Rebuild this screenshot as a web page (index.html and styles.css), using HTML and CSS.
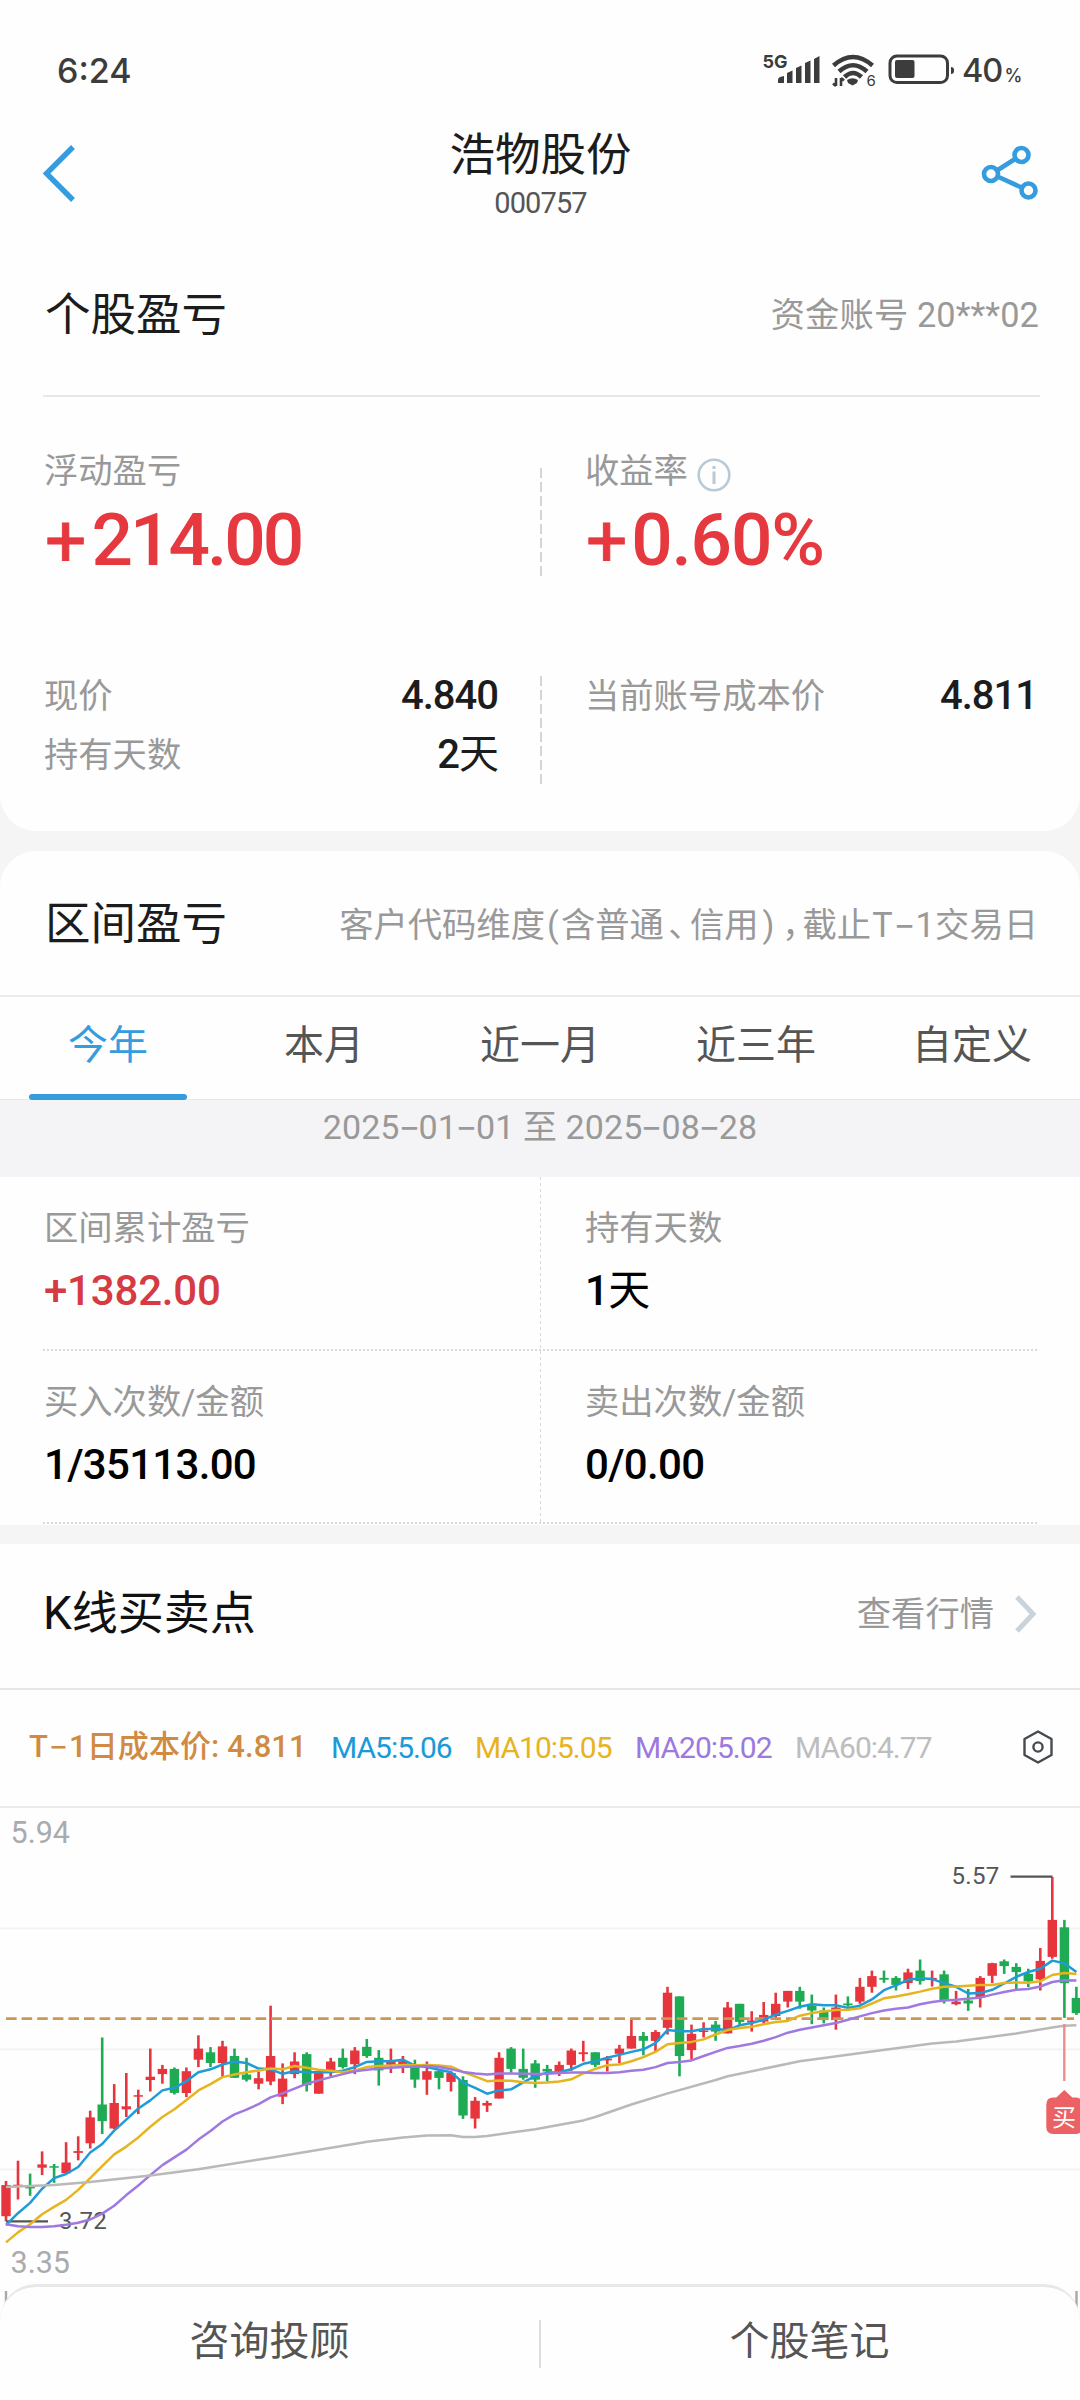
FILE: index.html
```html
<!DOCTYPE html>
<html lang="zh-CN">
<head>
<meta charset="utf-8">
<title>个股盈亏</title>
<link rel="stylesheet" href="styles.css">
</head>
<body>
<div class="app">
  <section class="card card-first">
    <div class="status">
      <span class="clock">6:24</span>
      <svg class="status-icons" viewBox="760 44 264 48" width="264" height="48">
        <g fill="#3c3c3c">
          <text x="762.5" y="67.5" class="net">5G</text>
          <path d="M778 83v-3q0-2 2-3l4-1v7zM787 83V73l5.500-2.500V83zM796 83V68l5.500-2.500V83zM805 83V63l5.500-2.500V83zM814 83V59l5.500-3V83z"/>
          <path d="M847 80q5.500-3.500 11 0l-1 3-4.500 2.500-4.500-2.500z"/>
          <path d="M836 78v8M833 83.500l3 2.500M841 86v-8M844 80.500l-3-2.500" stroke="#3c3c3c" stroke-width="2.600" fill="none"/>
          <text x="866.500" y="85.500" class="gen">6</text>
          <rect x="895" y="60" width="19.500" height="18" rx="2"/>
          <path d="M951 67q3 0 3 3v1q0 3-3 3z"/>
          <text x="962" y="82" class="pct">40</text>
          <text x="1004.500" y="82" class="sign">%</text>
        </g>
        <g fill="none" stroke="#3c3c3c">
          <path d="M833.500 65.500q19.500-17 39 0" stroke-width="4.500"/>
          <path d="M839 71.500q14-12.500 28 0" stroke-width="4.500"/>
          <path d="M844.500 77q8.500-8 17 0" stroke-width="4.500"/>
          <rect x="890" y="56" width="57.500" height="26.500" rx="7" stroke-width="3"/>
        </g>
      </svg>
    </div>
    <header class="nav">
      <svg class="back" viewBox="0 0 36 60" width="36" height="60"><path d="M33 4 6.500 30.500l26.500 26.500" fill="none" stroke="#359cdd" stroke-width="5.400"/></svg>
      <div class="nav-title">
        <h1>浩物股份</h1>
        <p>000757</p>
      </div>
      <svg class="share" viewBox="980 144 60 58" width="60" height="58">
        <g fill="none" stroke="#359cdd" stroke-width="4.600">
          <path d="M997 170.500l18-11.500M997.500 176.500l24 11"/>
          <circle cx="1021.500" cy="155" r="7"/><circle cx="991" cy="174" r="7"/><circle cx="1028.500" cy="190.500" r="7"/>
        </g>
      </svg>
    </header>
    <div class="head head-line">
      <h2>个股盈亏</h2>
      <span class="note">资金账号 20***02</span>
    </div>
    <div class="pair figures">
      <div class="col"><span class="label">浮动盈亏</span><strong class="big"><i class="plus">+</i>214.00</strong></div>
      <div class="col"><span class="label">收益率<svg class="info" viewBox="0 0 34 34" width="34" height="34"><circle cx="17" cy="17" r="15.300" fill="none" stroke="#b9cad6" stroke-width="2.600"/><path d="M17 13.500V26M17 8v3" stroke="#b9cad6" stroke-width="3"/></svg></span><strong class="big rate"><i class="plus">+</i>0.60%</strong></div>
    </div>
    <div class="pair details">
      <div class="col">
        <div class="row"><span>现价</span><b>4.840</b></div>
        <div class="row"><span>持有天数</span><b>2<i>天</i></b></div>
      </div>
      <div class="col">
        <div class="row"><span>当前账号成本价</span><b>4.811</b></div>
      </div>
    </div>
  </section>

  <section class="card card-range">
    <div class="head">
      <h2>区间盈亏</h2>
      <span class="note range-note">客户代码维度<i class="p16">(</i>含普通<i class="p26">、</i>信用<i class="p20">)</i><i class="p24">，</i>截止<i class="p23">T</i><i class="dash">-</i><i class="p20">1</i>交易日</span>
    </div>
    <nav class="tabs">
      <a class="on">今年</a><a>本月</a><a>近一月</a><a>近三年</a><a>自定义</a>
    </nav>
    <div class="dates">2025<i class="dash">-</i>01<i class="dash">-</i>01 至 2025<i class="dash">-</i>08<i class="dash">-</i>28</div>
    <div class="stats">
      <div class="cell"><span>区间累计盈亏</span><b class="up">+1382.00</b></div>
      <div class="cell"><span>持有天数</span><b>1<i>天</i></b></div>
      <div class="cell"><span>买入次数/金额</span><b>1/35113.00</b></div>
      <div class="cell"><span>卖出次数/金额</span><b>0/0.00</b></div>
    </div>
  </section>

  <section class="kline">
    <div class="head">
      <h2>K线买卖点</h2>
      <span class="note">查看行情<svg class="more" viewBox="0 0 24 40" width="24" height="40"><path d="M3 3l16 17L3 37" fill="none" stroke="#c8d3dc" stroke-width="5"/></svg></span>
    </div>
    <div class="legend">
      <span class="cost">T<i class="dash">-</i>1日成本价: 4.811</span>
      <span class="ma5">MA5:5.06</span>
      <span class="ma10">MA10:5.05</span>
      <span class="ma20">MA20:5.02</span>
      <span class="ma60">MA60:4.77</span>
      <svg class="gear" viewBox="0 0 34 36" width="34" height="36"><path d="M17 2.500l13.500 7.500v16L17 33.500 3.500 26V10z" fill="none" stroke="#444c50" stroke-width="2.400" stroke-linejoin="round"/><circle cx="17" cy="18" r="4.600" fill="none" stroke="#444c50" stroke-width="2.400"/></svg>
    </div>
    <svg class="chart" viewBox="0 1808 1080 520" width="1080" height="520">
      <g stroke="#f4f4f4" stroke-width="2"><path d="M0 1928.400h1080M0 2049.300h1080M0 2169.600h1080"/></g>
      <g fill="#a9abae" class="axis"><text x="10.500" y="1843">5.94</text><text x="10.500" y="2273">3.35</text></g>
      <path d="M6 2291v36M1076.500 2291v36" stroke="#a8a8a8" stroke-width="2.400"/>
      <g id="candles"></g>
      <path d="M6 2018.600H1074" stroke="#cb9853" stroke-width="2.600" stroke-dasharray="10.600 5"/>
      <g stroke="#555" stroke-width="2.200"><path d="M6 2221.400h42M1010.500 1876.600h42"/></g>
      <g fill="#555" class="peak"><text x="59" y="2228.500">3.72</text><text x="951.500" y="1884">5.57</text></g>
      <g id="averages"></g>
      <path d="M1064.300 2024v57" stroke="#ee8c8c" stroke-width="2.400"/>
      <path d="M1064.300 2090l8 7.500h3q7 0 7 7v22.500q0 7-7 7h-22q-7 0-7-7v-22.500q0-7 7-7h3z" fill="#ec6163"/>
      <text x="1052" y="2125.500" class="buy">买</text>
    </svg>
  </section>

  <footer class="bottom"><a>咨询投顾</a><a>个股笔记</a></footer>
</div>
<script src="chart.js"></script>
</body>
</html>
```
FILE: styles.css
```css
* { box-sizing: border-box; margin: 0; padding: 0; }
body {
  width: 1080px;
  background: #f5f5f5;
  font-family: Roboto, "Noto Sans CJK SC", sans-serif;
  color: #222;
}
.app { height: 2400px; overflow: hidden; display: flex; flex-direction: column; }
h1, h2, b, strong, i { font-weight: 400; font-style: normal; }
.card, .kline { background: #fefefe; }
.card-first { height: 831px; border-radius: 0 0 36px 36px; }

.status { height: 115px; padding: 44px 56px 0 57px; display: flex; justify-content: space-between; }
.clock { font: 500 34px/54px Inter, sans-serif; color: #3c3c3c; }
.status-icons text { font-family: Inter, sans-serif; }
.net { font-size: 18px; font-weight: 700; }
.gen { font-size: 15px; }
.pct { font-size: 32.500px; font-weight: 500; letter-spacing: -1px; }
.sign { font-size: 18px; font-weight: 500; }

.nav { height: 117px; padding: 0 40px; display: flex; justify-content: space-between; }
.back { margin-top: 28px; }
.share { margin-top: 29px; }
.nav-title { text-align: center; padding-left: 25px; }
.nav-title h1 { font-size: 45.500px; line-height: 66px; padding-top: 8px; color: #1c1c1c; }
.nav-title p { font-size: 29px; line-height: 30px; margin-top: -1px; color: #555; letter-spacing: -0.900px; }

.head { display: flex; justify-content: space-between; align-items: center; padding: 0 42px 0 45px; }
.head h2 { font-size: 45.500px; line-height: 66px; padding-top: 4px; color: #1c1c1c; }
.note { font-size: 34.300px; color: #999; display: flex; align-items: center; }
.head-line { height: 165px; margin: 0 40px 0 43px; padding: 0 1px 0 2px; border-bottom: 2px solid #e8e8e8; }
.head-line .note { letter-spacing: 0.100px; margin-top: -3px; }

.pair { display: grid; grid-template: 108px / 542px 538px; }
.pair .col:first-child { background: repeating-linear-gradient(#d5d5d5 0 10px, transparent 10px 14px) right / 2px 100% no-repeat; }
.figures { height: 108px; margin-top: 71px; }
.figures .col { display: flex; flex-direction: column; padding-left: 44px; }
.figures .col + .col { padding-left: 43px; }
.label { font-size: 34.300px; line-height: 40px; height: 40px; margin-top: -17px; color: #999; display: flex; }
.info { margin: 7px 0 0 9px; }
.big { font-size: 73px; line-height: 80px; margin: 9px 0 0 1px; color: #e5383f; font-weight: 500; letter-spacing: -3px; }
.rate { letter-spacing: -1.200px; }
.plus { margin-right: 8px; font-weight: 400; -webkit-text-stroke: 0.800px; }
.rate .plus { margin-right: 5px; }
.details { height: 108px; margin-top: 100px; }
.details .col { padding: 0 44px 0 44px; }
.details .col + .col { padding: 0 43px; }
.row { height: 59px; line-height: 40px; display: flex; justify-content: space-between; font-size: 34.300px; color: #999; }
.row b { font-size: 40px; color: #1c1c1c; font-weight: 500; letter-spacing: -1px; }

.card-range { height: 674px; margin-top: 20px; border-radius: 36px 36px 0 0; }
.card-range .head { height: 146px; border-bottom: 2px solid #ececec; }
.range-note { display: block; margin-top: -3px; white-space: nowrap; }
.range-note i { display: inline-block; text-align: center; }
.p16 { width: 16px; }
.p20 { width: 20px; }
.p23 { width: 23px; }
.p24 { width: 24px; font-feature-settings: "halt"; }
.p26 { width: 26px; font-feature-settings: "halt"; }
.dash { display: inline-block; width: 21px; text-align: center; font-family: Inter, sans-serif; transform: scaleX(1.400); }
.tabs { height: 102px; display: grid; grid-template-columns: repeat(5, 216px); }
.tabs a { font-size: 40px; line-height: 97px; text-align: center; color: #555; position: relative; }
.tabs .on { color: #359cdd; }
.tabs .on::after { content: ""; position: absolute; left: 29px; right: 29px; bottom: -1px; height: 6px; border-radius: 3px; background: #359cdd; }
.dates { height: 78px; border-top: 1px solid #e8e8ea; background: #f4f4f6; font-size: 34px; line-height: 54px; text-align: center; color: #999; letter-spacing: 0.100px; }
.dates .dash { line-height: 40px; width: 19px; }
.stats { display: grid; grid-template-columns: 541px 539px; height: 348px; background:
  repeating-linear-gradient(#d9d9d9 0 3px, transparent 3px 6px) 540px 0 / 1px 346px no-repeat,
  repeating-linear-gradient(90deg, #d9d9d9 0 2px, transparent 2px 4px) 43px 172px / 996px 2px no-repeat,
  repeating-linear-gradient(90deg, #d9d9d9 0 2px, transparent 2px 4px) 43px 345px / 996px 2px no-repeat; }
.cell { display: flex; flex-direction: column; padding: 28px 0 0 44px; }
.cell span { font-size: 34.300px; line-height: 46px; color: #999; }
.cell b { font-size: 42px; line-height: 50px; margin-top: 15px; color: #000; font-weight: 500; letter-spacing: -0.700px; }
.cell .up { color: #d63a42; letter-spacing: -0.200px; }

.kline { margin-top: 19px; }
.kline .head { height: 146px; padding: 0 42px 10px 43px; border-bottom: 2px solid #e6e6e6; }
.kline .head h2 { color: #111; font-size: 46px; }
.more { margin: 5px 0 0 20px; }
.legend { height: 118px; border-bottom: 2px solid #ececec; display: flex; align-items: center; padding: 0 25px 2px 29px; font-size: 30px; white-space: nowrap; }
.legend span { letter-spacing: -1px; }
.legend .cost { width: 302px; font-size: 31px; line-height: 40px; margin-top: -2px; color: #d08a41; font-weight: 500; letter-spacing: 0.100px; }
.ma5 { width: 144px; color: #1a9ad8; }
.ma10 { width: 160px; color: #e7b320; }
.ma20 { width: 160px; color: #9d78de; }
.ma60 { color: #bdbdbd; }
.gear { margin-left: auto; }
.chart { display: block; }
.axis { font-size: 30.500px; }
.peak { font-size: 24px; letter-spacing: 0.300px; }
.buy { font-size: 24px; fill: #fff; }

.bottom { position: relative; flex: none; height: 116px; margin-top: -44px; background: #fefefe; border-top: 3px solid #e9e7e9; border-radius: 36px 36px 0 0; display: grid; grid-template-columns: 539px 541px; }
.bottom a { text-align: center; font-size: 40px; line-height: 110px; color: #555; }
.bottom a + a { background: linear-gradient(#ddd, #ddd) 0 33px / 2px 48px no-repeat; }
```
FILE: chart.js
```js
// Candle rows: [rising, high, body top, body bottom, low], in chart units below TOP.
const TOP = 1820, UNIT = 2.7034, STEP = 12.027;
const candles = [
[1,976,987,1071,1085],[1,921,986,991,1026],[0,956,990,996,1016],[1,896,931,940,960],[0,930,936,940,981],[1,871,926,955,957],[1,855,895,900,920],[1,786,804,874,888],[0,588,769,814,849],[1,714,765,834,836],
[1,684,774,782,803],[1,729,744,748,795],[1,618,694,703,734],[1,662,673,687,713],[0,669,673,738,742],[1,669,679,738,749],[1,582,618,648,668],[0,614,628,657,668],[1,597,612,657,694],[0,618,638,697,697],
[0,643,688,702,707],[1,680,698,713,728],[1,502,638,707,717],[1,658,699,748,768],[1,628,653,687,698],[0,628,633,717,734],[1,680,683,740,740],[1,643,653,677,693],[0,618,643,668,672],[1,614,623,660,687],
[0,592,613,638,643],[0,622,643,677,718],[1,618,653,662,684],[1,638,652,662,684],[0,648,667,702,724],[1,653,679,702,743],[0,675,679,697,728],[1,680,684,708,734],[0,693,703,799,808],[1,749,759,807,834],
[1,759,765,772,789],[1,628,643,753,753],[0,614,618,673,683],[0,618,673,697,702],[0,649,658,702,724],[0,662,673,680,707],[1,653,662,680,692],[1,618,623,662,678],[1,597,628,633,653],[0,628,628,662,668],
[1,638,645,650,680],[1,608,618,632,658],[1,537,584,618,618],[0,573,584,597,636],[1,568,573,597,626],[1,451,467,562,580],[0,477,477,638,693],[1,553,578,622,648],[1,547,569,573,588],[0,543,553,572,597],
[1,492,507,577,577],[0,497,497,546,555],[1,517,542,547,572],[1,492,527,545,550],[1,467,497,530,535],[1,462,462,491,507],[0,451,462,491,510],[0,472,502,515,552],[0,507,515,541,550],[1,472,507,541,567],
[0,477,496,501,505],[1,427,451,491,497],[1,407,422,451,467],[0,407,427,432,440],[0,422,427,446,461],[1,402,412,441,457],[0,377,407,435,445],[1,407,427,432,450],[0,407,417,487,496],[1,462,491,498,501],
[0,457,488,496,516],[1,422,427,480,507],[1,386,387,421,441],[0,377,382,395,416],[0,387,397,411,457],[0,402,416,436,452],[1,346,381,431,461],[1,154,270,370,375],[0,270,290,441,535],[0,451,481,522,527]
];
const ma5 = [1095,1063,1035,997,968,957,938,899,876,840,810,780,758,731,724,706,682,674,661,653,657,672,674,686,679,683,681,682,678,668,
654,652,652,648,664,668,675,682,710,724,740,731,728,709,692,683,682,674,659,652,643,635,627,620,603,568,571,571,565,565,
568,555,549,540,526,516,505,498,501,501,508,502,485,460,447,432,428,430,441,451,469,468,459,442,424,411,402,380,387,411];
const ma10 = [1142,1115,1093,1066,1046,1027,1000,968,936,904,883,858,829,803,782,757,731,714,695,688,682,677,672,674,665,670,675,678,682,677,
668,665,664,662,663,662,664,667,681,693,706,704,705,709,711,710,707,701,685,673,663,661,652,641,627,606,603,600,593,580,
568,562,559,552,546,543,529,522,518,514,513,509,496,482,477,471,464,456,451,450,448,446,446,441,439,440,436,419,414,416];
const ma20 = [1093,1098,1100,1100,1098,1094,1089,1080,1064,1043,1014,988,960,933,912,891,864,841,815,796,783,768,750,739,726,713,704,695,687,679,
675,672,670,668,666,665,668,674,681,685,688,685,685,686,687,686,684,683,683,684,684,682,678,675,668,657,654,650,638,627,
616,611,605,597,587,575,567,561,555,549,540,531,522,515,510,507,498,492,488,486,483,480,472,465,459,457,450,438,433,434];
// Slow average: [x in thirds of a pixel, y in chart units] pairs.
const ma60 = [[18,992],[162,987],[270,979],[451,961],[595,944],[812,913],[1080,873],[1101,870],[1209,858],[1281,853],[1353,852],[1389,857],[1425,857],[1461,854],[1606,836],[1750,812],[1786,803],[1894,769],[2003,739],[2147,703],[2183,693],[2399,652],[2616,626],[2797,604],[2869,599],[3049,577],[3157,561],[3193,556],[3229,555]];

const y = v => (TOP + v / UNIT).toFixed(1);
const x = i => (6 + i * STEP).toFixed(1);
document.getElementById('candles').innerHTML = candles.map(([up, hi, a, b, lo], i) => {
  const c = up ? '#e6353c' : '#1fab54';
  return `<path d="M${x(i)} ${y(hi)}V${y(lo)}" stroke="${c}" stroke-width="2.6"/><rect x="${x(i) - 4.7}" y="${y(a)}" width="9.4" height="${((b - a) / UNIT).toFixed(1)}" fill="${c}"/>`;
}).join('');
const line = (points, c) => `<polyline points="${points}" fill="none" stroke="${c}" stroke-width="2.5" stroke-linejoin="round"/>`;
const series = ys => ys.map((v, i) => `${x(i)},${y(v)}`).join(' ');
document.getElementById('averages').innerHTML =
  line(series(ma5), '#1f9bd8') + line(series(ma10), '#e6b41f') + line(series(ma20), '#9f79e0') +
  line(ma60.map(([px, v]) => `${(px / 3).toFixed(1)},${y(v)}`).join(' '), '#b9b9b9');
```
